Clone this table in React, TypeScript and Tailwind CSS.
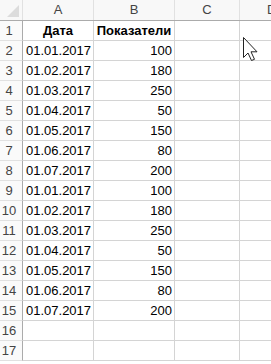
const rows: [string, string][] = [
  ['01.01.2017', '100'],
  ['01.02.2017', '180'],
  ['01.03.2017', '250'],
  ['01.04.2017', '50'],
  ['01.05.2017', '150'],
  ['01.06.2017', '80'],
  ['01.07.2017', '200'],
  ['01.01.2017', '100'],
  ['01.02.2017', '180'],
  ['01.03.2017', '250'],
  ['01.04.2017', '50'],
  ['01.05.2017', '150'],
  ['01.06.2017', '80'],
  ['01.07.2017', '200'],
]

const font = { fontFamily: '"Liberation Sans", Arial, sans-serif' }

function Row({ n, a, b, bold }: { n: number; a?: string; b?: string; bold?: boolean }) {
  return (
    <div className="flex h-5 text-[13px] leading-[19px]">
      <div className="w-[23px] shrink-0 border-r border-b border-r-[#ababab] border-b-[#e1e1e1] bg-[#fafafa] pr-[4px] text-center text-[#444]">
        {n}
      </div>
      <div
        className={`w-[71px] shrink-0 border-r border-b border-[#d4d4d4] px-[3px] text-black ${bold ? 'text-center font-bold' : 'text-left'}`}
      >
        {a}
      </div>
      <div
        className={`w-[81px] shrink-0 border-r border-b border-[#d4d4d4] px-[2px] text-black ${bold ? 'text-center font-bold' : 'text-right'}`}
      >
        {b}
      </div>
      <div className="w-[65px] shrink-0 border-r border-b border-[#d4d4d4]" />
      <div className="w-[40px] shrink-0 border-b border-[#d4d4d4]" />
    </div>
  )
}

export default function App() {
  return (
    <div className="relative h-[364px] w-[271px] overflow-hidden bg-white" style={font}>
      {/* column headers */}
      <div className="flex h-[21px] border-b border-[#ababab] bg-[#f8f8f8] text-[13px] leading-[20px] text-[#444]">
        <div className="relative w-[23px] shrink-0 border-r border-[#e1e1e1]">
          <svg className="absolute left-0 top-0" width="22" height="20" viewBox="0 0 22 20">
            <polygon points="7,17 19,17 19,5" fill="#dcdcdc" />
          </svg>
        </div>
        <div className="w-[71px] shrink-0 border-r border-[#e1e1e1] text-center">A</div>
        <div className="w-[81px] shrink-0 border-r border-[#e1e1e1] text-center">B</div>
        <div className="w-[65px] shrink-0 border-r border-[#e1e1e1] text-center">C</div>
        <div className="w-[40px] shrink-0 pl-[27px]">D</div>
      </div>

      <Row n={1} a="Дата" b="Показатели" bold />
      {rows.map(([a, b], i) => (
        <Row key={i} n={i + 2} a={a} b={b} />
      ))}
      <Row n={16} />
      <Row n={17} />

      {/* mouse pointer */}
      <svg className="absolute left-[242px] top-[36px]" width="18" height="26" viewBox="0 0 18 26">
        <path
          d="M1.5 1.5 L1.5 21.5 L6 17 L9.5 24.5 L12.5 23.3 L9 15.8 L15 15.8 Z"
          fill="#fff"
          stroke="#222"
          strokeWidth="1"
          strokeLinejoin="miter"
        />
      </svg>
    </div>
  )
}
